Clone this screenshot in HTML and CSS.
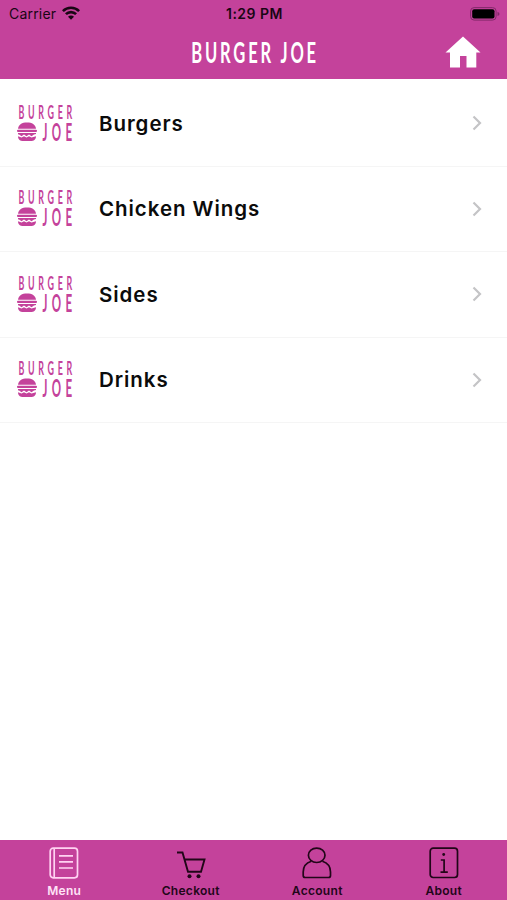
FILE: index.html
```html
<!DOCTYPE html>
<html lang="en">
<head>
    <meta charset="UTF-8">
    <meta name="viewport" content="width=device-width, initial-scale=1.0">
    <title>Burger Joe</title>
    <link rel="stylesheet" href="styles.css">
</head>
<body>

<!-- Shared shapes -->
<svg class="defs" width="0" height="0">
    <symbol id="burger" viewBox="0 0 20 20" preserveAspectRatio="none">
        <path d="M1 7C1.500 2.500 5 .5 10 .5S18.500 2.500 19 7z"/>
        <rect x="0" y="8" width="20" height="2.200" rx="1"/>
        <path d="M1 11.200h18v1l-2 .6-2.500 1.700-2.500-1.700-2.500 1.700L7 12.800l-2.500 1.700L2.500 13 1 12.500z"/>
        <path d="M1 14.500l3.500 1.300 2.500-1.300 2.500 1.300 2.500-1.300 2.500 1.300L19 14.500C19 18 16.500 19.500 14 19.500H6C3.500 19.500 1 18 1 14.500z"/>
    </symbol>
    <symbol id="chevron" viewBox="0 0 10 16">
        <path d="M1.500 1.500L8 8l-6.500 6.500" fill="none" stroke="#c4c4c6" stroke-width="2.200"/>
    </symbol>
</svg>

<header class="header">
    <div class="status-bar">
        <div class="carrier">
            <span>Carrier</span>
            <svg width="18" height="14" viewBox="0 0 18 14" fill="none" stroke="#190614" stroke-width="2.600">
                <path d="M.9 5.100a11.500 11.500 0 0 1 16.200 0"/>
                <path d="M3.900 8.200a7.200 7.200 0 0 1 10.200 0"/>
                <path d="M9 13.700L6 10.700a4.200 4.200 0 0 1 6 0z" fill="#190614" stroke="none"/>
            </svg>
        </div>
        <span class="time">1:29 PM</span>
        <svg class="battery" width="30" height="14" viewBox="0 0 30 14">
            <rect x=".6" y=".6" width="25.500" height="12.500" rx="3.500" fill="none" stroke="#84296a" stroke-width="1"/>
            <rect x="2.200" y="2.200" width="22.300" height="9.300" rx="2" fill="#000"/>
            <path d="M27.500 4.700q2 .8 2 2.200t-2 2.200z" fill="#84296a"/>
        </svg>
    </div>
    <div class="title-bar">
        <h1><span>BURGER JOE</span></h1>
        <svg class="home" width="36" height="32" viewBox="0 0 36 32" fill="#fff">
            <path d="M18 .5L35.500 16.500H31.300V31.500H21.500V20H15V31.500H5V16.500H.5z"/>
        </svg>
    </div>
</header>

<main class="menu">
    <a class="menu-item">
        <svg class="logo" width="56" height="37" viewBox="0 0 56 37">
            <use href="#burger" x="0" y="17" width="20" height="19.500"/>
            <text class="logo-top" transform="scale(.48 1)" x="3" y="14" textLength="112">BURGER</text>
            <text class="logo-bottom" transform="scale(.48 1)" x="53" y="36" textLength="62">JOE</text>
        </svg>
        <span class="name">Burgers</span>
        <svg class="arrow" width="10" height="16"><use href="#chevron"/></svg>
    </a>
    <a class="menu-item">
        <svg class="logo" width="56" height="37" viewBox="0 0 56 37">
            <use href="#burger" x="0" y="17" width="20" height="19.500"/>
            <text class="logo-top" transform="scale(.48 1)" x="3" y="14" textLength="112">BURGER</text>
            <text class="logo-bottom" transform="scale(.48 1)" x="53" y="36" textLength="62">JOE</text>
        </svg>
        <span class="name">Chicken Wings</span>
        <svg class="arrow" width="10" height="16"><use href="#chevron"/></svg>
    </a>
    <a class="menu-item">
        <svg class="logo" width="56" height="37" viewBox="0 0 56 37">
            <use href="#burger" x="0" y="17" width="20" height="19.500"/>
            <text class="logo-top" transform="scale(.48 1)" x="3" y="14" textLength="112">BURGER</text>
            <text class="logo-bottom" transform="scale(.48 1)" x="53" y="36" textLength="62">JOE</text>
        </svg>
        <span class="name">Sides</span>
        <svg class="arrow" width="10" height="16"><use href="#chevron"/></svg>
    </a>
    <a class="menu-item">
        <svg class="logo" width="56" height="37" viewBox="0 0 56 37">
            <use href="#burger" x="0" y="17" width="20" height="19.500"/>
            <text class="logo-top" transform="scale(.48 1)" x="3" y="14" textLength="112">BURGER</text>
            <text class="logo-bottom" transform="scale(.48 1)" x="53" y="36" textLength="62">JOE</text>
        </svg>
        <span class="name">Drinks</span>
        <svg class="arrow" width="10" height="16"><use href="#chevron"/></svg>
    </a>
</main>

<nav class="tab-bar">
    <a class="tab active">
        <svg width="30" height="32" viewBox="0 0 30 32">
            <rect x="1.200" y="1.200" width="27.300" height="29.600" rx="3"/>
            <path d="M5.200 1v30M10 8.800h14M10 14.900h14M10 21h14"/>
        </svg>
        <span>Menu</span>
    </a>
    <a class="tab">
        <svg width="30" height="32" viewBox="0 0 30 32">
            <path d="M1 5.500h5.500L12 24.800h13l3.500-12.300H8.500" stroke-width="1.900"/>
            <circle cx="13.500" cy="29.300" r="2" class="solid"/>
            <circle cx="22.500" cy="29.300" r="2" class="solid"/>
        </svg>
        <span>Checkout</span>
    </a>
    <a class="tab">
        <svg width="30" height="32" viewBox="0 0 30 32">
            <ellipse cx="14.700" cy="8.300" rx="8.300" ry="7.200"/>
            <path d="M9.300 14.200C3.500 16 1.200 20 1.200 25v3.500q0 2 2 2h23.300q2 0 2-2V25c0-5-2.300-9-8.100-10.800"/>
        </svg>
        <span>Account</span>
    </a>
    <a class="tab">
        <svg width="30" height="32" viewBox="0 0 30 32">
            <rect x="1.200" y="1.200" width="27.300" height="29.300" rx="3"/>
            <path d="M11.800 13h3.300v12M11.500 25.200h7.300"/>
            <circle cx="14.700" cy="7.500" r="1.400" class="solid"/>
        </svg>
        <span>About</span>
    </a>
</nav>

</body>
</html>
```
FILE: styles.css
```css
body {
    font-family: Inter, "Liberation Sans", sans-serif;
    background-color: #fff;
    color: #0b0b0b;
    margin: 0;
    height: 100vh;
    display: flex;
    flex-direction: column;
}

.defs {
    position: absolute;
}

.header {
    height: 79px;
    background-color: #c4429b;
}

.status-bar {
    height: 27px;
    padding: 0 7px 0 9px;
    display: grid;
    grid-template-columns: 1fr auto 1fr;
    align-items: center;
    font-size: 14px;
    color: #190614;
}

.carrier {
    display: flex;
    align-items: center;
    gap: 6px;
    letter-spacing: 0.2px;
}

.carrier svg {
    margin-bottom: 2px;
}

.time {
    font-weight: 600;
    letter-spacing: 0.5px;
}

.battery {
    justify-self: end;
}

.title-bar {
    height: 49px;
    padding: 0 26px;
    display: grid;
    grid-template-columns: 1fr auto 1fr;
    align-items: center;
}

h1 {
    grid-column: 2;
    width: 126px;
    margin: 0;
    display: flex;
    justify-content: center;
    font: 700 29px/49px Lato, sans-serif;
    letter-spacing: 5px;
    color: #fff;
    white-space: nowrap;
}

h1 span {
    transform: scaleX(0.57);
    margin-right: -3px;
}

.home {
    justify-self: end;
}

.menu {
    flex: 1;
    padding-top: 2px;
}

.menu-item {
    box-sizing: border-box;
    height: 85.5px;
    padding: 0 25px 0 17px;
    display: flex;
    align-items: center;
    border-bottom: 1px solid #f5f5f5;
}

.logo {
    fill: #c4429b;
    overflow: visible;
}

.logo text {
    font-family: Lato, sans-serif;
    font-weight: 700;
}

.logo-top {
    font-size: 18.5px;
}

.logo-bottom {
    font-size: 24px;
}

.name {
    flex: 1;
    margin-left: 26px;
    font-size: 20.5px;
    font-weight: 600;
    letter-spacing: 0.95px;
}

.tab-bar {
    height: 60px;
    padding-left: 1px;
    display: grid;
    grid-template-columns: repeat(4, 1fr);
    background-color: #c4429b;
}

.tab {
    display: flex;
    flex-direction: column;
    align-items: center;
    padding-top: 7px;
    font-size: 12px;
    font-weight: 600;
    line-height: 15px;
    letter-spacing: 0.3px;
    color: #210618;
}

.tab svg {
    fill: none;
    stroke: #210618;
    stroke-width: 1.7;
    margin-bottom: 4px;
}

.tab .solid {
    fill: #210618;
    stroke: none;
}

.tab.active {
    color: #ffe3f7;
}

.tab.active svg {
    stroke: #ffd3f2;
}
```
